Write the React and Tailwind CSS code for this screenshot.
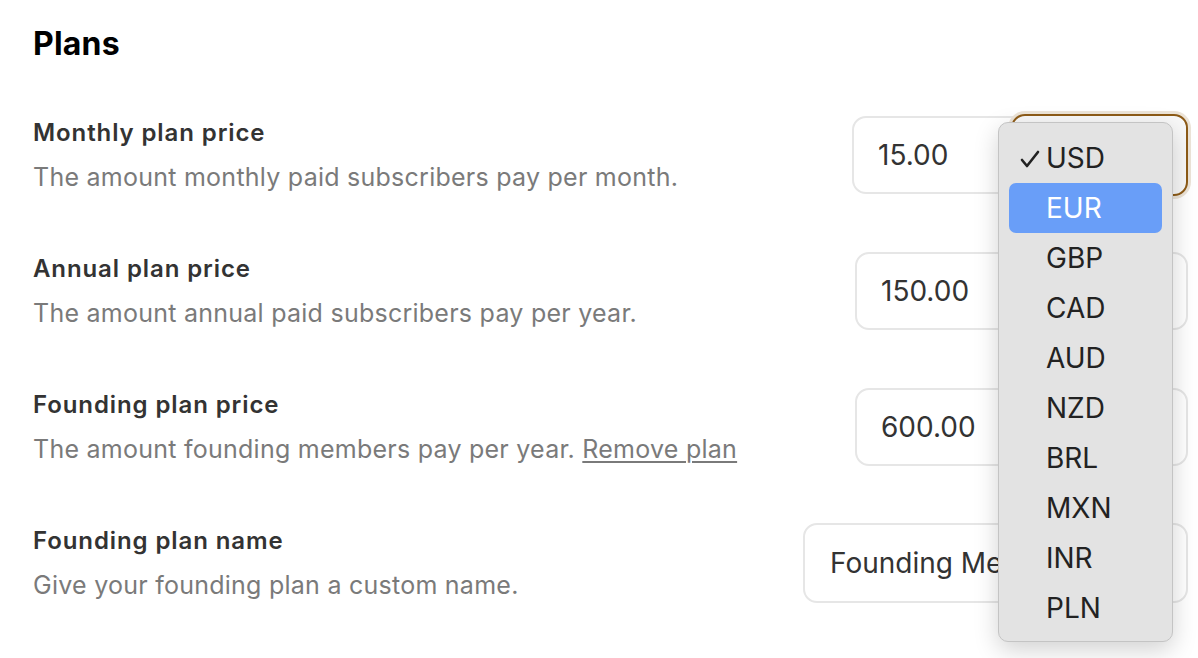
// Plans settings with open currency menu
const ROWS = [
  {
    id: 'monthly',
    label: 'Monthly plan price',
    description: 'The amount monthly paid subscribers pay per month.',
    value: '15.00',
    focused: true,
  },
  {
    id: 'annual',
    label: 'Annual plan price',
    description: 'The amount annual paid subscribers pay per year.',
    value: '150.00',
  },
  {
    id: 'founding',
    label: 'Founding plan price',
    description: 'The amount founding members pay per year.',
    value: '600.00',
    remove: true,
  },
]

const CURRENCIES = ['USD', 'EUR', 'GBP', 'CAD', 'AUD', 'NZD', 'BRL', 'MXN', 'INR', 'PLN']

const font = { fontFamily: 'Inter, "Noto Sans", sans-serif' }

function RowText({ label, description, remove }) {
  return (
    <div>
      <h2 className="text-[24px] leading-[30px] font-semibold text-[#333] tracking-[0.9px]">{label}</h2>
      <p className="mt-[14px] text-[25px] leading-[30px] text-[#7a7a7a] tracking-[0.25px]">
        {description}
        {remove && (
          <>
            {' '}
            <a className="underline underline-offset-[3px] decoration-[2px]">Remove plan</a>
          </>
        )}
      </p>
    </div>
  )
}

export default function App() {
  return (
    <div className="relative w-[1198px] h-[658px] bg-white overflow-hidden" style={font}>
      <div className="pl-[33px] pr-[10px] pt-[24px]">
        <h1 className="text-[32px] leading-[40px] font-bold text-black tracking-[0.2px]">Plans</h1>

        <div className="mt-[52px] flex flex-col gap-[58px]">
          {ROWS.map(row => (
            <div key={row.id} className="flex items-center justify-between h-[78px]">
              <RowText {...row} />
              <div className={`flex h-[78px] rounded-[14px] border-2 border-[#e6e6e6] bg-white ${row.focused ? 'w-[336px]' : 'w-[333px]'}`}>
                <div className="flex items-center w-[157px] pl-[24px] text-[28px] text-[#333]">
                  {row.value}
                </div>
                {row.focused ? (
                  <div className="-my-[4px] -mr-[2px] flex-1 rounded-[14px] border-2 border-[#8d5b17] ring-[3px] ring-[#ece4d8] bg-[#f8f8f8]" />
                ) : (
                  <div className="flex-1" />
                )}
              </div>
            </div>
          ))}

          <div className="flex items-center justify-between h-[78px]">
            <RowText label="Founding plan name" description="Give your founding plan a custom name." />
            <div className="flex items-center h-[80px] w-[385px] rounded-[14px] border-2 border-[#e6e6e6] bg-white pl-[25px] text-[28px] text-[#333] whitespace-nowrap">
              Founding Members
            </div>
          </div>
        </div>
      </div>

      {/* currency menu */}
      <div className="absolute left-[998px] top-[122px] w-[175px] h-[520px] rounded-[10px] border border-[#c4c4c4] bg-[#e3e3e3] shadow-[0_8px_24px_rgba(0,0,0,0.18)] px-[10px] py-[10px]">
        {CURRENCIES.map((c, i) => (
          <div
            key={c}
            className={`relative flex items-center h-[50px] rounded-[7px] pl-[37px] text-[28px] ${
              i === 1 ? 'bg-[#699ef8] text-white' : 'text-[#222]'
            }`}
          >
            {i === 0 && (
              <svg className="absolute left-[11px] top-[16px] w-[20px] h-[20px]" viewBox="0 0 20 20" fill="none">
                <path d="M2 11l5 6L18 3" stroke="#222" strokeWidth="2.6" strokeLinecap="round" strokeLinejoin="round" />
              </svg>
            )}
            {c}
          </div>
        ))}
      </div>
    </div>
  )
}
